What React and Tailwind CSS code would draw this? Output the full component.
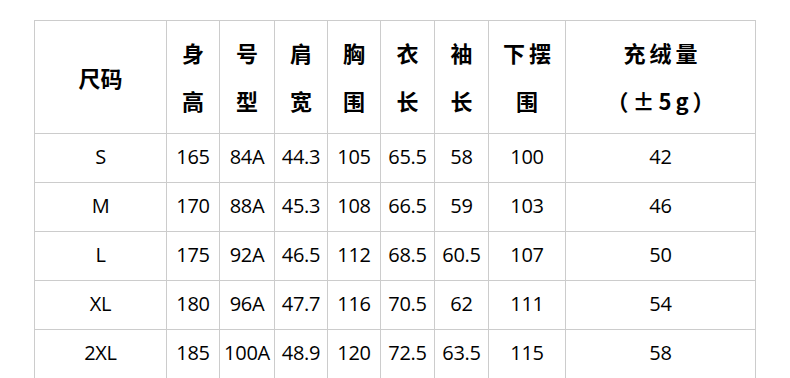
export default function App() {
  const widths = [132, 53, 55, 53, 53, 54, 54, 77, 190];
  const header = [
    { one: "尺码" },
    { a: "身", b: "高" },
    { a: "号", b: "型" },
    { a: "肩", b: "宽" },
    { a: "胸", b: "围" },
    { a: "衣", b: "长" },
    { a: "袖", b: "长" },
    { a: "下摆", b: "围", sp: "tracking-[4px] pl-[4px]" },
    { a: "充绒量", b: "（±5g）", sp: "tracking-[4px] pl-[4px]" },
  ];
  const rows = [
    ["S", "165", "84A", "44.3", "105", "65.5", "58", "100", "42"],
    ["M", "170", "88A", "45.3", "108", "66.5", "59", "103", "46"],
    ["L", "175", "92A", "46.5", "112", "68.5", "60.5", "107", "50"],
    ["XL", "180", "96A", "47.7", "116", "70.5", "62", "111", "54"],
    ["2XL", "185", "100A", "48.9", "120", "72.5", "63.5", "115", "58"],
  ];
  const cjk = { fontFamily: '"Noto Sans CJK SC", "Noto Sans", sans-serif' };
  const num = { fontFamily: '"Open Sans", "Noto Sans CJK SC", sans-serif' };
  return (
    <div className="w-[790px] h-[378px] bg-white overflow-hidden pt-[20px] pl-[34px]">
      <table className="table-fixed border-collapse text-black" style={{ width: 722 }}>
        <colgroup>
          {widths.map((w, i) => (
            <col key={i} style={{ width: w }} />
          ))}
        </colgroup>
        <thead>
          <tr className="h-[113px]">
            {header.map((h, i) => (
              <th
                key={i}
                className="border border-[#cccccc] p-0 text-center align-middle font-bold text-[22px] text-black"
                style={cjk}
              >
                {h.one ? (
                  <div className="leading-[48px]">{h.one}</div>
                ) : (
                  <div className={`pb-[2px] leading-[48px] ${h.sp || ""}`}>
                    <div>{h.a}</div>
                    <div>{h.b}</div>
                  </div>
                )}
              </th>
            ))}
          </tr>
        </thead>
        <tbody>
          {rows.map((r, ri) => (
            <tr key={ri} className="h-[49px]">
              {r.map((c, ci) => (
                <td
                  key={ci}
                  className="border border-[#cccccc] p-0 pb-[3px] text-center align-middle text-[20px] leading-none whitespace-nowrap tracking-[-0.3px]"
                  style={num}
                >
                  {c}
                </td>
              ))}
            </tr>
          ))}
        </tbody>
      </table>
    </div>
  );
}
